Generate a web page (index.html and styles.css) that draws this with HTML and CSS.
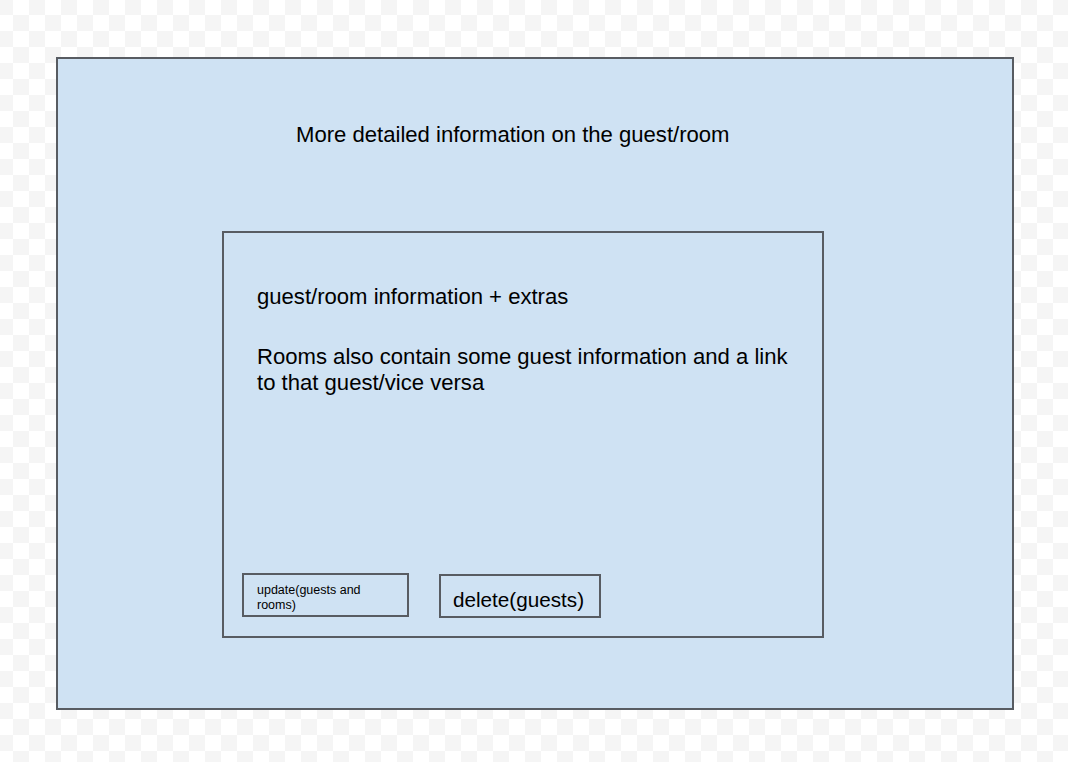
FILE: index.html
```html
<!DOCTYPE html>
<html>
<head>
<meta charset="utf-8">
<link rel="stylesheet" href="styles.css">
</head>
<body>
<div class="frame">
  <div class="title">More detailed information on the guest/room</div>
  <div class="panel">
    <p class="info">guest/room information + extras</p>
    <p class="info second">Rooms also contain some guest information and a link to that guest/vice versa</p>
    <div class="actions">
      <div class="btn small">update(guests and rooms)</div>
      <div class="btn big">delete(guests)</div>
    </div>
  </div>
</div>
</body>
</html>
```

FILE: styles.css
```css
html, body {
  margin: 0;
  padding: 0;
}
body {
  width: 1068px;
  height: 762px;
  overflow: hidden;
  font-family: "Liberation Sans", Arial, sans-serif;
  color: #000;
  background-color: #ffffff;
  background-image:
    linear-gradient(45deg, #f5f5f5 25%, transparent 25%, transparent 75%, #f5f5f5 75%),
    linear-gradient(45deg, #f5f5f5 25%, transparent 25%, transparent 75%, #f5f5f5 75%);
  background-size: 32px 32px;
  background-position: -3px 15px, 13px -1px;
  padding-top: 57px;
  box-sizing: border-box;
}
.frame {
  box-sizing: border-box;
  margin-left: 56px;
  width: 958px;
  height: 653px;
  background: #cfe2f3;
  border: 2px solid #585c62;
  padding: 63px 0 0 164px;
}
.title {
  font-size: 22.1px;
  line-height: 25px;
  margin-left: 74px;
  white-space: nowrap;
}
.panel {
  box-sizing: border-box;
  margin-top: 84px;
  width: 602px;
  height: 407px;
  border: 2px solid #585c62;
  padding: 51px 22px 18px 18px;
  display: flex;
  flex-direction: column;
}
.info {
  margin: 0 0 0 15px;
  font-size: 22.1px;
  line-height: 26px;
}
.second {
  margin-top: 34px;
}
.actions {
  margin-top: auto;
  display: flex;
  align-items: flex-start;
  gap: 30px;
}
.btn {
  box-sizing: border-box;
  height: 44px;
  border: 2px solid #585c62;
}
.small {
  width: 167px;
  font-size: 12.5px;
  line-height: 15px;
  padding: 8px 20px 0 13px;
}
.big {
  width: 162px;
  margin-top: 1px;
  font-size: 20.7px;
  line-height: 24px;
  padding: 12px 0 0 12px;
}
```
